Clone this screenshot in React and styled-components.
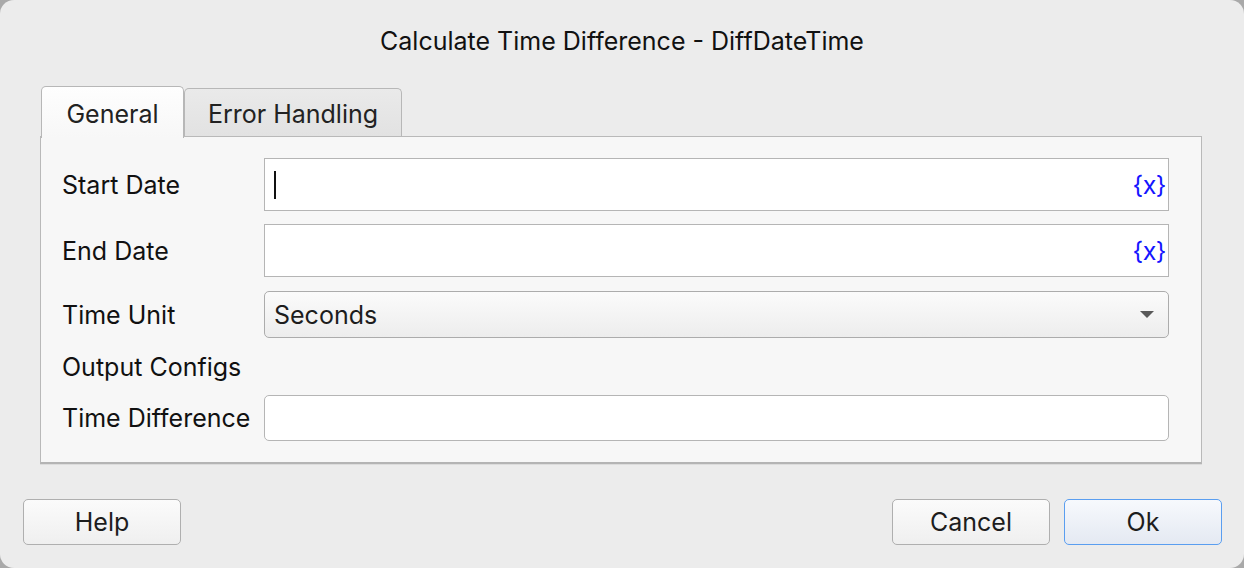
import React from 'react';
import styled, { createGlobalStyle } from 'styled-components';

const GlobalStyle = createGlobalStyle`
  html, body {
    margin: 0;
    padding: 0;
    background: #a9a9a9;
  }
  * {
    box-sizing: border-box;
  }
`;

const Window = styled.div`
  width: 1244px;
  height: 568px;
  background: #ececec;
  border-radius: 14px;
  overflow: hidden;
  font-family: Inter, "Liberation Sans", sans-serif;
  color: #1d1d1d;
  display: flex;
  flex-direction: column;
`;

const Title = styled.div`
  height: 80px;
  display: flex;
  align-items: center;
  justify-content: center;
  padding-top: 1px;
  font-size: 25px;
  color: #111;
`;

const Body = styled.div`
  padding: 4px 42px 0 40px;
`;

const TabBar = styled.div`
  display: flex;
  align-items: flex-end;
  padding-left: 1px;
  height: 52px;
`;

const Tab = styled.div`
  height: ${p => (p.$active ? '52px' : '48px')};
  width: ${p => p.$width}px;
  display: flex;
  align-items: center;
  justify-content: center;
  padding-top: 3px;
  font-size: 25px;
  color: #222;
  border: 1.5px solid #b7b7b7;
  border-bottom: none;
  border-radius: 5px 5px 0 0;
  background: ${p => (p.$active ? 'linear-gradient(#fefefe, #f7f7f7)' : 'linear-gradient(#eaeaea, #e2e2e2)')};
  margin-bottom: ${p => (p.$active ? '-1.5px' : '0')};
  position: relative;
  z-index: ${p => (p.$active ? 1 : 0)};
`;

const Panel = styled.div`
  height: 328px;
  background: #f7f7f7;
  border: 1.5px solid #b9b9b9;
  border-bottom: 2px solid #b4b4b4;
  box-shadow: 0 1px 0 #dcdcdc;
  padding: 21px 32px 0 21px;
  display: flex;
  flex-direction: column;
`;

const Row = styled.div`
  display: flex;
  align-items: center;
  height: ${p => p.$h}px;
  margin-bottom: ${p => p.$mb || 0}px;
`;

const Label = styled.div`
  width: 202px;
  flex-shrink: 0;
  font-size: 25px;
  color: #111;
  white-space: nowrap;
`;

const Field = styled.div`
  flex: 1;
  height: 100%;
  background: #fff;
  border: 1.5px solid #b5b5b5;
  border-radius: ${p => p.$radius || 0}px;
  display: flex;
  align-items: center;
  justify-content: space-between;
  padding: 0 2px 0 9px;
`;

const Caret = styled.span`
  width: 2px;
  height: 28px;
  background: #111;
`;

const VarTag = styled.span`
  margin-left: auto;
  font-size: 25px;
  color: #1414ff;
  letter-spacing: -0.5px;
`;

const Select = styled.div`
  flex: 1;
  height: 100%;
  border: 1.5px solid #acacac;
  border-radius: 5px;
  background: linear-gradient(#fbfbfb, #ededed);
  display: flex;
  align-items: center;
  justify-content: space-between;
  padding: 0 14px 0 9px;
  font-size: 25px;
  color: #1d1d1d;
`;

const Arrow = styled.span`
  width: 0;
  height: 0;
  border-left: 7px solid transparent;
  border-right: 7px solid transparent;
  border-top: 7px solid #595959;
`;

const Section = styled.div`
  font-size: 25px;
  color: #111;
  height: 29px;
  display: flex;
  align-items: center;
  margin-bottom: 14px;
`;

const Footer = styled.div`
  display: flex;
  align-items: center;
  padding: 35px 22px 0 23px;
  gap: 14px;
`;

const Spacer = styled.div`
  flex: 1;
`;

const Button = styled.button`
  width: 158px;
  height: 46px;
  font-family: inherit;
  font-size: 25px;
  color: #1d1d1d;
  border-radius: 5px;
  border: 1.5px solid ${p => (p.$primary ? '#5a9ef0' : '#afafaf')};
  background: ${p => (p.$primary ? 'linear-gradient(#f7f9fd, #e4e9f2)' : 'linear-gradient(#fbfbfb, #efefef)')};
  padding: 0;
`;

export default function App() {
  return (
    <>
      <GlobalStyle />
      <Window>
        <Title>Calculate Time Difference - DiffDateTime</Title>
        <Body>
          <TabBar>
            <Tab $active $width={143}>General</Tab>
            <Tab $width={218}>Error Handling</Tab>
          </TabBar>
          <Panel>
            <Row $h={53} $mb={13}>
              <Label>Start Date</Label>
              <Field>
                <Caret />
                <VarTag>{'{x}'}</VarTag>
              </Field>
            </Row>
            <Row $h={53} $mb={14}>
              <Label>End Date</Label>
              <Field>
                <VarTag>{'{x}'}</VarTag>
              </Field>
            </Row>
            <Row $h={47} $mb={14}>
              <Label>Time Unit</Label>
              <Select>
                Seconds
                <Arrow />
              </Select>
            </Row>
            <Section>Output Configs</Section>
            <Row $h={46}>
              <Label>Time Difference</Label>
              <Field $radius={5} />
            </Row>
          </Panel>
        </Body>
        <Footer>
          <Button>Help</Button>
          <Spacer />
          <Button>Cancel</Button>
          <Button $primary>Ok</Button>
        </Footer>
      </Window>
    </>
  );
}
